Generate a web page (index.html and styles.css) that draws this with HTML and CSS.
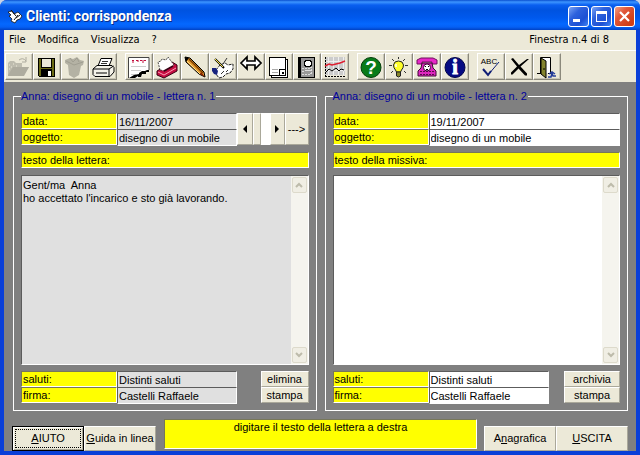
FILE: index.html
```html
<!DOCTYPE html>
<html lang="it">
<head>
<meta charset="utf-8">
<title>Clienti: corrispondenza</title>
<link rel="stylesheet" href="styles.css">
</head>
<body>
<div class="window">
  <header class="titlebar">
    <svg class="app-icon" viewBox="0 0 16 16" aria-hidden="true"><path d="M1 4l4-1 2 3 4-2 4 4-2 3-3 1-2 3-4-2 1-2-3-3 2-1z" fill="#fff" stroke="#111" stroke-width=".8"/><path d="M4 2l5 6M7 12l4-5M9 10l4-3" stroke="#111" fill="none"/></svg>
    <h1 class="title">Clienti: corrispondenza</h1>
    <div class="window-buttons">
      <button class="win-btn" aria-label="Riduci"><svg viewBox="0 0 19 19"><path d="M4 12h7v3H4z" fill="#fff"/></svg></button>
      <button class="win-btn" aria-label="Ingrandisci"><svg viewBox="0 0 19 19"><path d="M4 4h11v11H4zM5 7v7h9V7z" fill="#fff" fill-rule="evenodd"/></svg></button>
      <button class="win-btn win-close" aria-label="Chiudi"><svg viewBox="0 0 19 19"><path d="M5 5l9 9M14 5l-9 9" stroke="#fff" stroke-width="2.2"/></svg></button>
    </div>
  </header>

  <div class="client">
    <nav class="menubar">
      <button class="menu">File</button>
      <button class="menu">Modifica</button>
      <button class="menu">Visualizza</button>
      <button class="menu">?</button>
      <span class="window-count">Finestra n.4 di 8</span>
    </nav>

    <div class="toolbar" role="toolbar">
      <div class="tool-group">
        <button class="tool" aria-label="Apri" disabled><svg viewBox="0 0 24 24"><path d="M1 8l2-2h4l2 2h6v4h7l-6 9H1z" fill="#bebcae"/><path d="M1 20l5-8h16l-5 9H1z" fill="#aeac9f"/><path d="M12 5q4-3 7 1M19 2v5h-4" fill="none" stroke="#aeac9f"/><path d="M2 10h1m1 2h1m-3 2h1m3-5h1m2 2h1" stroke="#ece9d8"/></svg></button>
        <button class="tool" aria-label="Salva"><svg viewBox="0 0 24 24" shape-rendering="crispEdges"><path d="M3 3h17v19H4l-1-1z" fill="#000"/><path d="M4 4h2v9h11V4h2v17H4z" fill="#6b6b14"/><path d="M7 4h9v8H7z" fill="#ece9d8"/><path d="M6 14h11v7H6z" fill="#000"/><path d="M13 16h3v5h-3z" fill="#fff"/></svg></button>
        <button class="tool" aria-label="Elimina" disabled><svg viewBox="0 0 24 24"><path d="M2 5l5-2 3 1 4-2 3 3 4 1-1 4-2 1-2 9-5 3-5-3L5 10 2 8z" fill="#b4b2a4"/><path d="M3 6l8 4 9-3M7 3l3 4 4-4 2 4" fill="none" stroke="#a09e91"/></svg></button>
        <button class="tool" aria-label="Stampa"><svg viewBox="0 0 24 24"><path d="M7 11l3-7.500h11L18 11z" fill="#fff" stroke="#000"/><path d="M11 6.500h6M10 8.500h6" stroke="#333"/><path d="M2 14l4-3.500h15l2 2V17l-4 4.500H4l-2-2z" fill="#f4f2e8" stroke="#000"/><path d="M2 14h16l4.500-3M18 14v7M5 18h11" fill="none" stroke="#000"/></svg></button>
      </div>
      <div class="tool-group">
        <button class="tool" aria-label="Agenda"><svg viewBox="0 0 24 24"><path d="M1 2h21v14h-3v2h-3l-1 3h-3l-1 2H1z" fill="#fff"/><path d="M1.500 23V2.500H22V15" fill="none" stroke="#444"/><path d="M5 5.500h2m2 0h2m2 0h2m2 0h2M6 5v3m5-3v2m5-2v3" stroke="#c10d3c"/><path d="M4 11.500h15M4 15.500h10M4 19.500h5" stroke="#ccc"/><path d="M22 15v2h-3v2h-4l-1 3h-3v-1l-3 2H2l5-3 5-1v-1l3-2h3l2-1z" fill="#000"/></svg></button>
        <button class="tool" aria-label="Rubrica"><svg viewBox="0 0 24 24"><path d="M2 16l15-9 5 3v6L9 23l-7-3z" fill="#c40c42" stroke="#390014"/><path d="M5 15L3 7l3-1 1-2 4 1 2-3 6 8-9 6z" fill="#fff" stroke="#222" stroke-width=".8" stroke-dasharray="2 1"/><path d="M3 17l6 3 12-7" fill="none" stroke="#ff9db2"/><path d="M9 16l9-5" stroke="#390014" stroke-width="1.500"/></svg></button>
        <button class="tool" aria-label="Modifica"><svg viewBox="0 0 24 24"><path d="M2 2l5 1 14 14 1 5-6-3L3 7z" fill="#e2982f" stroke="#000"/><path d="M6 4l14 14" stroke="#7b3c00" stroke-width="1.500"/><path d="M4 6l13 13" stroke="#ffe08b"/><path d="M2 2l4 1-3 4z" fill="#000"/><path d="M18 17l4 5-5-3z" fill="#871b00"/></svg></button>
        <button class="tool" aria-label="Scrivi"><svg viewBox="0 0 24 24"><path d="M5 15l4-5 5-2 3 2 5-1v5l-3 4-4 1-3 3-4 1-3-4z" fill="#fff" stroke="#222" stroke-dasharray="3 1"/><path d="M1 13h4l2 3-1 4-3-1-2-3z" fill="#17227d"/><path d="M4 4l9 9" stroke="#000" stroke-width="2"/><path d="M4 4l8 8" stroke="#ffe548"/><path d="M12 9l4-6M10 19l3-3M15 17l2-2" stroke="#333"/></svg></button>
        <button class="tool" aria-label="Scambia"><svg viewBox="0 0 24 24"><path d="M2 8l6-6v4h8V2l6 6-6 6v-4H8v4z" fill="#fff" stroke="#000" stroke-width="1.700"/></svg></button>
        <button class="tool" aria-label="Copia"><svg viewBox="0 0 24 24" shape-rendering="crispEdges"><path d="M4.500 4.500h16v18h-16z" fill="#fff" stroke="#000"/><path d="M2.500 2.500h16v18h-16z" fill="#fff" stroke="#000"/><path d="M5 14.500h6M5 17.500h6" stroke="#aaa"/><path d="M12.500 20v-5.500h6" fill="none" stroke="#000"/><path d="M15 17h2v2h-2z" fill="#000"/></svg></button>
        <button class="tool" aria-label="Registro"><svg viewBox="0 0 24 24" shape-rendering="crispEdges"><path d="M3 2h17v21H3z" fill="#000"/><path d="M6 3h13v19H6z" fill="#999"/><path d="M10.500 5.500h5v1h1v4h-1v1h-5v-1h-1v-4h1z" fill="#fff" stroke="#000"/><path d="M7 14l3-1 3 1 4-2M7 17l5-2 3 1 3-2M7 20l3-1 4 1 4-3" stroke="#ddd" fill="none" stroke-dasharray="2 1"/></svg></button>
        <button class="tool" aria-label="Grafico"><svg viewBox="0 0 24 24"><path d="M2 2h20v18H2z" fill="#ccc"/><path d="M5.500 2v18M10.500 2v18M15.500 2v18M20.500 2v18M2 6.500h20M2 15.500h20" stroke="#eee"/><path d="M2.500 2v20M2 21.500h20" fill="none" stroke="#000" stroke-dasharray="2 1"/><path d="M2 11l4-2 3 1 4-1 4-1 5-2" fill="none" stroke="#dd2031" stroke-width="1.500"/><path d="M3 17l3-3 3 2 4-3 3 3 2-2 3 1" fill="none" stroke="#000"/></svg></button>
      </div>
      <div class="tool-group">
        <button class="tool" aria-label="Aiuto"><svg viewBox="0 0 24 24"><circle cx="12" cy="12.500" r="10" fill="#087b19" stroke="#033c0a"/><text class="glyph-help" x="12" y="19">?</text></svg></button>
        <button class="tool" aria-label="Suggerimento"><svg viewBox="0 0 24 24"><path d="M8.500 15q-2-2-2-5 .5-4 5-4t5 4q0 3-2 5l-1 2H9.500z" fill="#ffff29" stroke="#222"/><path d="M9.500 17h4v4l-2 1-2-1z" fill="#86862e" stroke="#222"/><path d="M9 9v3" stroke="#fff" stroke-width="1.500"/><path d="M11.500 2v2M5 4l2 2M18 4l-2 2M2 10.500h3M18 10.500h3M4 18l2-2M19 18l-2-2" stroke="#333"/></svg></button>
        <button class="tool" aria-label="Telefono"><svg viewBox="0 0 24 24"><path d="M2 8V5l4-2h12l4 2v4h-5V7H7v2H2z" fill="#e827c8" stroke="#6f105f"/><path d="M7 8h10l1 5 3 3v5H3v-5l3-3z" fill="#dd27be" stroke="#430638"/><path d="M5 16.500h14M5 19.500h14" stroke="#5a0a4c" stroke-dasharray="2 1"/><circle cx="12" cy="12.500" r="3.500" fill="#fff" stroke="#430638"/><path d="M10 11.500h1m2 0h1m-3 3h2" stroke="#000"/></svg></button>
        <button class="tool" aria-label="Informazioni"><svg viewBox="0 0 24 24"><circle cx="12" cy="12.500" r="10" fill="#060b83" stroke="#020449"/><text class="glyph-info" x="12" y="19">i</text></svg></button>
      </div>
      <div class="tool-group">
        <button class="tool" aria-label="Controllo ortografico"><svg viewBox="0 0 24 24"><text class="glyph-abc" x="10" y="9">ABC</text><path d="M4 15l5 5L20 7" fill="none" stroke="#111f76"/><path d="M4 14l5 6 3-4" fill="none" stroke="#111f76" stroke-width="2"/></svg></button>
        <button class="tool" aria-label="Cancella"><svg viewBox="0 0 24 24"><path d="M4 4l2-1 6 7 8-6h2l-8.500 7.500 6.500 7v2h-2l-6.500-7-6 6H4v-2l6-6z" fill="#000"/></svg></button>
        <button class="tool" aria-label="Esci"><svg viewBox="0 0 24 24"><path d="M5.500 18V2.500h10V18M2 18.500h4M13 18.500h4" fill="none" stroke="#000"/><path d="M8 3h7v15H8z" fill="#fff"/><path d="M6 3l5 3v17l-5-4z" fill="#83832d" stroke="#000"/><path d="M9 13v2" stroke="#000"/><path d="M13 22h3l1-4M14 19l3-2 3 2M17 18l1 3h3" fill="none" stroke="#263e9a" stroke-width="1.500"/></svg></button>
      </div>
    </div>

    <main class="workspace">
      <div class="letters">
        <fieldset class="letter letter-sent">
          <legend>Anna: disegno di un mobile - lettera n. 1</legend>
          <div class="head">
            <div class="fields">
              <label class="tag" for="data1">data:</label><input class="field" id="data1" value="16/11/2007" readonly>
              <label class="tag" for="ogg1">oggetto:</label><input class="field" id="ogg1" value="disegno di un mobile" readonly>
            </div>
            <div class="pager">
              <button class="btn" aria-label="Precedente"><svg class="arrow" viewBox="0 0 4 8"><path d="M4 0v8L0 4z"/></svg></button>
              <span class="btn thumb"></span>
              <span class="track"></span>
              <button class="btn" aria-label="Successiva"><svg class="arrow" viewBox="0 0 4 8"><path d="M0 0v8l4-4z"/></svg></button>
              <button class="btn">---&gt;</button>
            </div>
          </div>
          <label class="tag bar" for="testo1">testo della lettera:</label>
          <div class="editor">
            <textarea class="text" id="testo1" readonly>Gent/ma  Anna
ho accettato l'incarico e sto già lavorando.</textarea>
            <div class="scroll">
              <button class="scroll-btn" aria-label="Su"><svg viewBox="0 0 8 6"><path d="M1 5l3-3 3 3"/></svg></button>
              <button class="scroll-btn" aria-label="Giù"><svg viewBox="0 0 8 6"><path d="M1 1l3 3 3-3"/></svg></button>
            </div>
          </div>
          <div class="foot">
            <div class="fields">
              <label class="tag" for="sal1">saluti:</label><input class="field" id="sal1" value="Distinti saluti" readonly>
              <label class="tag" for="fir1">firma:</label><input class="field" id="fir1" value="Castelli Raffaele" readonly>
            </div>
            <div class="actions">
              <button class="btn">elimina</button>
              <button class="btn">stampa</button>
            </div>
          </div>
        </fieldset>

        <fieldset class="letter letter-new">
          <legend>Anna: disegno di un mobile - lettera n. 2</legend>
          <div class="head">
            <div class="fields">
              <label class="tag" for="data2">data:</label><input class="field" id="data2" value="19/11/2007">
              <label class="tag" for="ogg2">oggetto:</label><input class="field" id="ogg2" value="disegno di un mobile">
            </div>
          </div>
          <label class="tag bar" for="testo2">testo della missiva:</label>
          <div class="editor">
            <textarea class="text" id="testo2"></textarea>
            <div class="scroll">
              <button class="scroll-btn" aria-label="Su"><svg viewBox="0 0 8 6"><path d="M1 5l3-3 3 3"/></svg></button>
              <button class="scroll-btn" aria-label="Giù"><svg viewBox="0 0 8 6"><path d="M1 1l3 3 3-3"/></svg></button>
            </div>
          </div>
          <div class="foot">
            <div class="fields">
              <label class="tag" for="sal2">saluti:</label><input class="field" id="sal2" value="Distinti saluti">
              <label class="tag" for="fir2">firma:</label><input class="field" id="fir2" value="Castelli Raffaele">
            </div>
            <div class="actions">
              <button class="btn">archivia</button>
              <button class="btn">stampa</button>
            </div>
          </div>
        </fieldset>
      </div>

      <footer class="commands">
        <button class="btn command default"><span class="focus"><u>A</u>IUTO</span></button>
        <button class="btn command"><span><u>G</u>uida in linea</span></button>
        <p class="hint">digitare il testo della lettera a destra</p>
        <button class="btn command"><span>A<u>n</u>agrafica</span></button>
        <button class="btn command"><span><u>U</u>SCITA</span></button>
      </footer>
    </main>
  </div>
</div>
</body>
</html>
```

FILE: styles.css
```css
* {
  box-sizing: border-box;
}

body {
  margin: 0;
  background: #c9d3e6;
  color: #000;
  font: 11px/13px "Liberation Sans", Arial, sans-serif;
}

button,
input,
textarea {
  margin: 0;
  padding: 0;
  border: 0;
  border-radius: 0;
  background: none;
  color: inherit;
  font: inherit;
}

.window {
  display: flex;
  flex-direction: column;
  min-height: 100vh;
  border-radius: 7px 7px 0 0;
  background: #0a3fd8;
  overflow: hidden;
}

/* Title bar */

.titlebar {
  display: flex;
  align-items: center;
  height: 30px;
  padding: 2px 5px 0 7px;
  background: linear-gradient(#0a4fd0 0, #3d95ff 2px, #0a5ff0 5px, #0053e0 10px, #0059ee 18px, #0468ff 24px, #0560f5 27px, #0042c4 30px);
}

.app-icon {
  width: 16px;
  height: 16px;
}

.title {
  flex: 1;
  margin: 0 0 0 3px;
  color: #fff;
  font: bold 14px/16px Roboto, sans-serif;
  text-shadow: 1px 1px #0a2f8c;
}

.window-buttons {
  display: flex;
  gap: 2px;
}

.win-btn {
  width: 21px;
  height: 21px;
  border: 1px solid #fff;
  border-radius: 3px;
  background: linear-gradient(135deg, #7ba4f4, #2e62dd 35%, #1c50d4 70%, #3f85f4);
}

.win-btn svg {
  display: block;
  width: 19px;
  height: 19px;
}

.win-close {
  background: linear-gradient(135deg, #f0a186, #e1573a 35%, #cf3f17 80%);
}

/* Menu and toolbar */

.client {
  display: flex;
  flex: 1;
  flex-direction: column;
  margin: 0 4px 4px;
  background: #ece9d8;
}

.menubar {
  display: flex;
  align-items: center;
  gap: 12px;
  height: 20px;
  padding: 0 27px 0 5px;
  font: 11px/14px "DejaVu Sans Condensed", "DejaVu Sans", sans-serif;
}

.window-count {
  margin-left: auto;
}

.toolbar {
  display: flex;
  gap: 8px;
  padding: 2px 1px;
  border-top: 1px solid #fff;
}

.tool-group {
  display: flex;
}

.tool {
  width: 28px;
  height: 27px;
  border: 1px solid;
  border-color: #fff #8b897c #8b897c #fff;
  box-shadow: inset -1px -1px #c9c6b6;
}

.tool svg {
  display: block;
  width: 24px;
  height: 24px;
  margin-left: 1px;
}

.tool text {
  text-anchor: middle;
}

.glyph-help {
  fill: #fff;
  font: bold 19px "Liberation Sans", sans-serif;
}

.glyph-info {
  fill: #fff;
  stroke: #fff;
  font: bold 20px "Liberation Serif", serif;
}

.glyph-abc {
  fill: #000;
  font: 8px "Liberation Sans", sans-serif;
}

/* Workspace */

.workspace {
  display: flex;
  flex: 1;
  flex-direction: column;
  padding: 8px 8px 0;
  background: #808080;
}

.letters {
  display: grid;
  flex: 1;
  grid-template-columns: 1fr 1fr;
  gap: 8px;
  margin-left: 1px;
}

.letter {
  display: flex;
  flex-direction: column;
  min-width: 0;
  margin: 0;
  padding: 10px 7px 7px;
  border: 1px solid #fff;
}

.letter legend {
  padding: 0 1px 0 0;
  color: #00009c;
}

.letter-sent {
  --paper: #e0e0e0;
}

.letter-new {
  --paper: #fff;
}

.head,
.foot {
  display: flex;
}

.fields {
  display: grid;
  flex: 1;
  grid-template-columns: 96px 1fr;
  grid-auto-rows: 16px;
}

.tag {
  height: 16px;
  padding-left: 1px;
  border: 1px solid;
  border-color: #77775a #fff #fff #77775a;
  background: #ff0;
  line-height: 15px;
}

.field {
  width: 100%;
  min-width: 0;
  height: 17px;
  padding: 1px 0 0 1px;
  border: 1px solid;
  border-color: #5c5c5c #fff #fff #5c5c5c;
  background: var(--paper);
}

.btn {
  border: 1px solid;
  border-color: #fff #aaa89a #aaa89a #fff;
  background: #ece9d8;
  text-align: center;
}

.pager {
  display: grid;
  grid-template-columns: 16px 8px 9px 15px 24px;
  height: 32px;
}

.track {
  background: #fff;
}

.arrow {
  width: 4px;
  height: 8px;
}

.bar {
  margin: 7px 0;
}

.editor {
  display: flex;
  flex: 1;
  border: 1px solid;
  border-color: #5c5c5c #fff #fff #5c5c5c;
  background: var(--paper);
}

.text {
  flex: 1;
  min-width: 0;
  padding: 3px 0 0 1px;
  outline: 0;
  resize: none;
}

.scroll {
  display: flex;
  flex-direction: column;
  justify-content: space-between;
  width: 17px;
  padding: 1px;
  background: #f5f4ee;
}

.scroll-btn {
  width: 15px;
  height: 16px;
  border: 1px solid #dddacb;
  border-radius: 2px;
  background: #f0eee4;
}

.scroll-btn svg {
  display: block;
  width: 8px;
  height: 6px;
  margin: 0 auto;
  fill: none;
  stroke: #bdbbaa;
  stroke-width: 2;
}

.foot {
  margin-top: 6px;
}

.foot .fields {
  flex: none;
  grid-template-columns: 96px 120px;
}

.actions {
  display: grid;
  grid-auto-rows: 16px;
  width: 48px;
  margin-left: auto;
}

.letter-new .actions {
  width: 56px;
}

.actions .btn {
  line-height: 14px;
}

/* Bottom commands */

.commands {
  display: grid;
  grid-template-columns: 72px 72px 1fr 72px 72px;
  align-items: end;
  margin-top: 8px;
}

.command {
  height: 25px;
}

.default {
  padding: 2px;
  border-color: #000;
  box-shadow: inset 1px 1px #fff, inset -1px -1px #aaa89a;
}

.focus {
  display: block;
  border: 1px dotted #000;
  line-height: 17px;
}

.hint {
  height: 30px;
  margin: 0 7px 2px 8px;
  border: 1px solid;
  border-color: #77775a #fff #fff #77775a;
  background: #ff0;
  text-align: center;
  line-height: 15px;
}
```
